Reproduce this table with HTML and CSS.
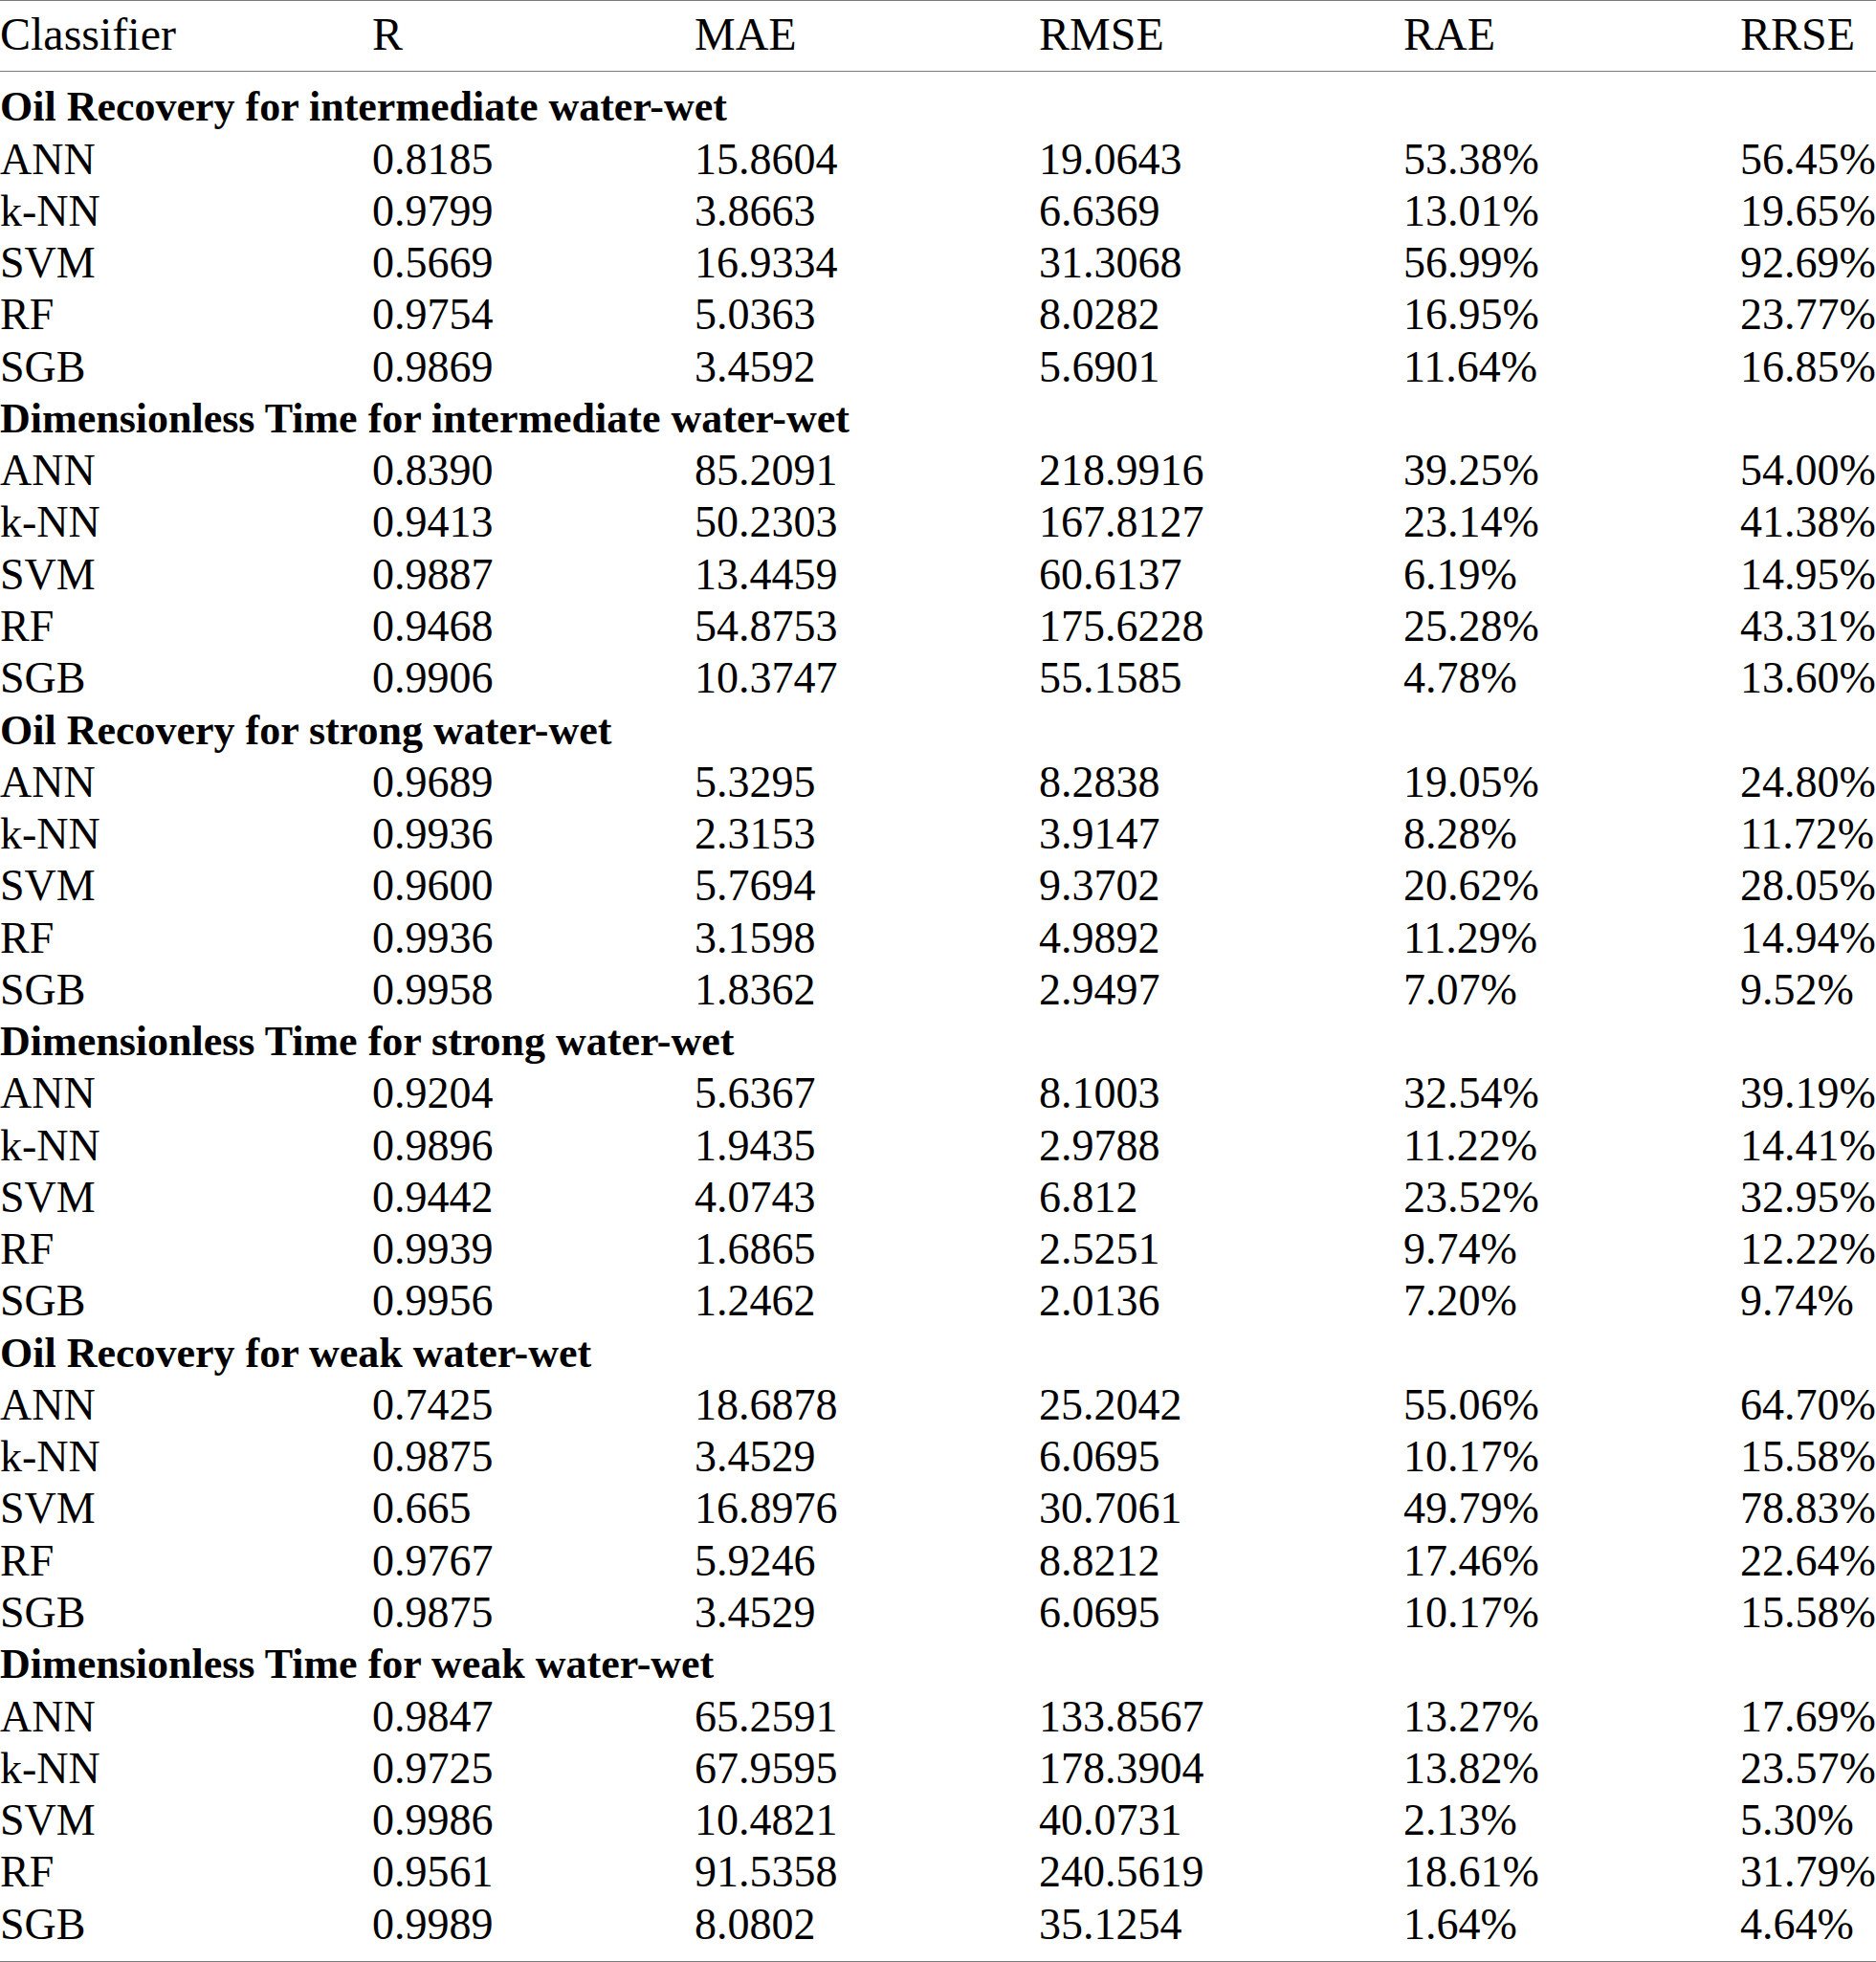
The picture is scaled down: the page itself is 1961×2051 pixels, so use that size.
FILE: index.html
```html
<!DOCTYPE html>
<html lang="en">
<head>
<meta charset="utf-8">
<title>Classifier performance</title>
<link rel="stylesheet" href="styles.css">
</head>
<body>
<table class="results">
  <colgroup>
    <col class="c-name">
    <col class="c-r">
    <col class="c-mae">
    <col class="c-rmse">
    <col class="c-rae">
    <col class="c-rrse">
  </colgroup>
  <thead>
    <tr><th>Classifier</th><th>R</th><th>MAE</th><th>RMSE</th><th>RAE</th><th>RRSE</th></tr>
  </thead>
  <tbody>
    <tr class="sec"><td colspan="6">Oil Recovery for intermediate water-wet</td></tr>
    <tr><td>ANN</td><td>0.8185</td><td>15.8604</td><td>19.0643</td><td>53.38%</td><td>56.45%</td></tr>
    <tr><td>k-NN</td><td>0.9799</td><td>3.8663</td><td>6.6369</td><td>13.01%</td><td>19.65%</td></tr>
    <tr><td>SVM</td><td>0.5669</td><td>16.9334</td><td>31.3068</td><td>56.99%</td><td>92.69%</td></tr>
    <tr><td>RF</td><td>0.9754</td><td>5.0363</td><td>8.0282</td><td>16.95%</td><td>23.77%</td></tr>
    <tr><td>SGB</td><td>0.9869</td><td>3.4592</td><td>5.6901</td><td>11.64%</td><td>16.85%</td></tr>
    <tr class="sec"><td colspan="6">Dimensionless Time for intermediate water-wet</td></tr>
    <tr><td>ANN</td><td>0.8390</td><td>85.2091</td><td>218.9916</td><td>39.25%</td><td>54.00%</td></tr>
    <tr><td>k-NN</td><td>0.9413</td><td>50.2303</td><td>167.8127</td><td>23.14%</td><td>41.38%</td></tr>
    <tr><td>SVM</td><td>0.9887</td><td>13.4459</td><td>60.6137</td><td>6.19%</td><td>14.95%</td></tr>
    <tr><td>RF</td><td>0.9468</td><td>54.8753</td><td>175.6228</td><td>25.28%</td><td>43.31%</td></tr>
    <tr><td>SGB</td><td>0.9906</td><td>10.3747</td><td>55.1585</td><td>4.78%</td><td>13.60%</td></tr>
    <tr class="sec"><td colspan="6">Oil Recovery for strong water-wet</td></tr>
    <tr><td>ANN</td><td>0.9689</td><td>5.3295</td><td>8.2838</td><td>19.05%</td><td>24.80%</td></tr>
    <tr><td>k-NN</td><td>0.9936</td><td>2.3153</td><td>3.9147</td><td>8.28%</td><td>11.72%</td></tr>
    <tr><td>SVM</td><td>0.9600</td><td>5.7694</td><td>9.3702</td><td>20.62%</td><td>28.05%</td></tr>
    <tr><td>RF</td><td>0.9936</td><td>3.1598</td><td>4.9892</td><td>11.29%</td><td>14.94%</td></tr>
    <tr><td>SGB</td><td>0.9958</td><td>1.8362</td><td>2.9497</td><td>7.07%</td><td>9.52%</td></tr>
    <tr class="sec"><td colspan="6">Dimensionless Time for strong water-wet</td></tr>
    <tr><td>ANN</td><td>0.9204</td><td>5.6367</td><td>8.1003</td><td>32.54%</td><td>39.19%</td></tr>
    <tr><td>k-NN</td><td>0.9896</td><td>1.9435</td><td>2.9788</td><td>11.22%</td><td>14.41%</td></tr>
    <tr><td>SVM</td><td>0.9442</td><td>4.0743</td><td>6.812</td><td>23.52%</td><td>32.95%</td></tr>
    <tr><td>RF</td><td>0.9939</td><td>1.6865</td><td>2.5251</td><td>9.74%</td><td>12.22%</td></tr>
    <tr><td>SGB</td><td>0.9956</td><td>1.2462</td><td>2.0136</td><td>7.20%</td><td>9.74%</td></tr>
    <tr class="sec"><td colspan="6">Oil Recovery for weak water-wet</td></tr>
    <tr><td>ANN</td><td>0.7425</td><td>18.6878</td><td>25.2042</td><td>55.06%</td><td>64.70%</td></tr>
    <tr><td>k-NN</td><td>0.9875</td><td>3.4529</td><td>6.0695</td><td>10.17%</td><td>15.58%</td></tr>
    <tr><td>SVM</td><td>0.665</td><td>16.8976</td><td>30.7061</td><td>49.79%</td><td>78.83%</td></tr>
    <tr><td>RF</td><td>0.9767</td><td>5.9246</td><td>8.8212</td><td>17.46%</td><td>22.64%</td></tr>
    <tr><td>SGB</td><td>0.9875</td><td>3.4529</td><td>6.0695</td><td>10.17%</td><td>15.58%</td></tr>
    <tr class="sec"><td colspan="6">Dimensionless Time for weak water-wet</td></tr>
    <tr><td>ANN</td><td>0.9847</td><td>65.2591</td><td>133.8567</td><td>13.27%</td><td>17.69%</td></tr>
    <tr><td>k-NN</td><td>0.9725</td><td>67.9595</td><td>178.3904</td><td>13.82%</td><td>23.57%</td></tr>
    <tr><td>SVM</td><td>0.9986</td><td>10.4821</td><td>40.0731</td><td>2.13%</td><td>5.30%</td></tr>
    <tr><td>RF</td><td>0.9561</td><td>91.5358</td><td>240.5619</td><td>18.61%</td><td>31.79%</td></tr>
    <tr><td>SGB</td><td>0.9989</td><td>8.0802</td><td>35.1254</td><td>1.64%</td><td>4.64%</td></tr>
  </tbody>
</table>
</body>
</html>
```
FILE: styles.css
```css
html, body {
  margin: 0;
  padding: 0;
  background: #ffffff;
  overflow: hidden;
}

.results {
  width: 1961px;
  table-layout: fixed;
  border-collapse: separate;
  border-spacing: 0;
  font-family: "Liberation Serif", "Times New Roman", serif;
  font-size: 46px;
  line-height: 54.26px;
  color: #000000;
}

.c-name { width: 389px; }
.c-r    { width: 337px; }
.c-mae  { width: 360px; }
.c-rmse { width: 381px; }
.c-rae  { width: 352px; }
.c-rrse { width: 142px; }

.results th,
.results td {
  padding: 0;
  text-align: left;
  vertical-align: baseline;
  white-space: nowrap;
  overflow: visible;
}

.results th {
  font-weight: normal;
  font-size: 48px;
  padding-top: 8.4px;
  padding-bottom: 10.34px;
  border-top: 1px solid #7a7a7a;
  border-bottom: 1px solid #7a7a7a;
}

.results .sec td {
  font-weight: bold;
  font-size: 44px;
}

.results tbody tr:first-child td {
  padding-top: 10.34px;
}

.results tbody tr:last-child td {
  padding-bottom: 11.3px;
  border-bottom: 1px solid #7a7a7a;
}
```
